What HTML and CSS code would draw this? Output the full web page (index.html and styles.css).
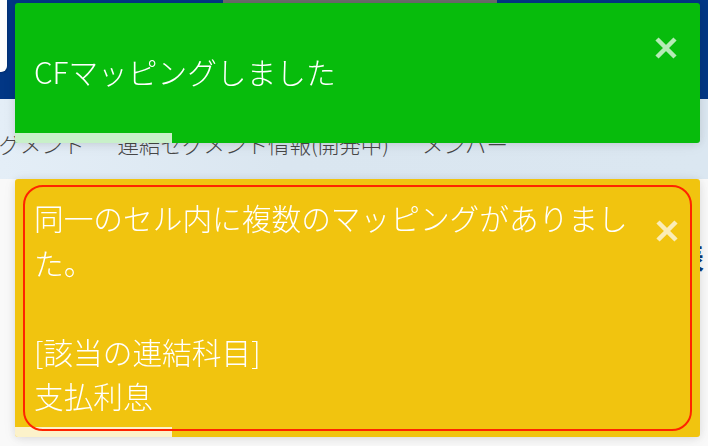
FILE: index.html
```html
<!DOCTYPE html>
<html lang="ja">
<head>
  <meta charset="UTF-8">
  <meta name="viewport" content="width=device-width, initial-scale=1.0">
  <title>連結CF</title>
  <link rel="stylesheet" href="styles.css">
</head>
<body>
  <header class="header">
    <div class="side-card"></div>
    <div class="tab-indicator"></div>
  </header>

  <nav class="nav">
    <span class="nav-item first">セグメント</span>
    <span class="nav-item">連結セグメント情報(開発中)</span>
    <span class="nav-item">メンバー</span>
  </nav>

  <main class="main">
    <h2 class="page-title">連結キャッシュ・フロー精算表</h2>
  </main>

  <div class="toast-container">
    <div class="toast toast-success">
      <div class="toast-body">CFマッピングしました</div>
      <button class="toast-close" aria-label="close">
        <svg viewBox="0 0 22 22" width="22" height="22"><path d="M2 2L20 20M20 2L2 20" /></svg>
      </button>
      <div class="toast-progress"></div>
    </div>

    <div class="toast toast-warning">
      <div class="toast-inner">
        <div class="toast-body">同一のセル内に複数のマッピングがありました。<br><br>[該当の連結科目]<br>支払利息</div>
        <button class="toast-close" aria-label="close">
          <svg viewBox="0 0 22 22" width="22" height="22"><path d="M2 2L20 20M20 2L2 20" /></svg>
        </button>
      </div>
      <div class="toast-progress"></div>
    </div>
  </div>
</body>
</html>
```

FILE: styles.css
```css
body { margin: 0; background: #f9f9f9; font-family: "Noto Sans CJK JP", "Liberation Sans", sans-serif; overflow: hidden; }

.header { height: 99px; background: #023785; display: flex; align-items: flex-start; }
.side-card { width: 7px; height: 72px; background: #fdfdfd; border-radius: 0 0 6px 0; box-shadow: 1px 1px 2px rgba(0,0,0,0.15); }
.tab-indicator { width: 274px; height: 3px; margin-left: 216px; background: #6c6c6c; }

.nav {
  height: 80px;
  display: flex;
  align-items: center;
  padding-top: 8px;
  box-sizing: border-box;
  background: linear-gradient(90deg, #e4eef7 0%, #dae6f0 40%, #dbe7f1 100%);
  font-size: 21.5px;
  font-weight: 300;
  color: #474747;
  white-space: nowrap;
}
.nav-item { margin-right: 33px; }
.nav-item.first { margin-left: -23px; }

.main { padding: 58px 4px 0 0; }
.page-title { margin: 0; text-align: right; font-size: 28px; line-height: 40px; color: #0c3a7c; }

.toast-container {
  position: fixed;
  top: 3px;
  left: 15px;
  width: 685px;
  display: flex;
  flex-direction: column;
  gap: 36px;
}

.toast {
  position: relative;
  display: flex;
  box-sizing: border-box;
  border-radius: 3px;
  color: #fff;
  overflow: hidden;
  box-shadow: 0 1px 10px rgba(0,0,0,0.1), 0 2px 15px rgba(0,0,0,0.05);
}
.toast-body { flex: 1; font-size: 29.7px; line-height: 1.5; font-weight: 300; }

.toast-close {
  flex: none;
  width: 23px;
  height: 22px;
  padding: 0;
  border: none;
  background: none;
  cursor: pointer;
  opacity: 0.7;
}
.toast-close svg { display: block; }
.toast-close path { stroke: #fff; stroke-width: 4.5; fill: none; }

.toast-progress {
  position: absolute;
  left: 0;
  bottom: 0;
  width: 157px;
  height: 10px;
  background: rgba(255,255,255,0.78);
}

.toast-success { height: 140px; background: #07bc0c; align-items: center; padding: 0 22px 2px 19px; }
.toast-success .toast-close { align-self: flex-start; margin-top: 34px; }

.toast-warning { height: 258px; background: #f1c40f; padding: 6px 8px; }
.toast-inner {
  position: relative;
  z-index: 1;
  flex: 1;
  display: flex;
  gap: 10px;
  padding: 9px 11px 9px 9px;
  border: 2px solid #ff2400;
  border-radius: 20px;
}
.toast-warning .toast-body { padding-right: 16px; }
.toast-warning .toast-close { margin-top: 24px; }
```
